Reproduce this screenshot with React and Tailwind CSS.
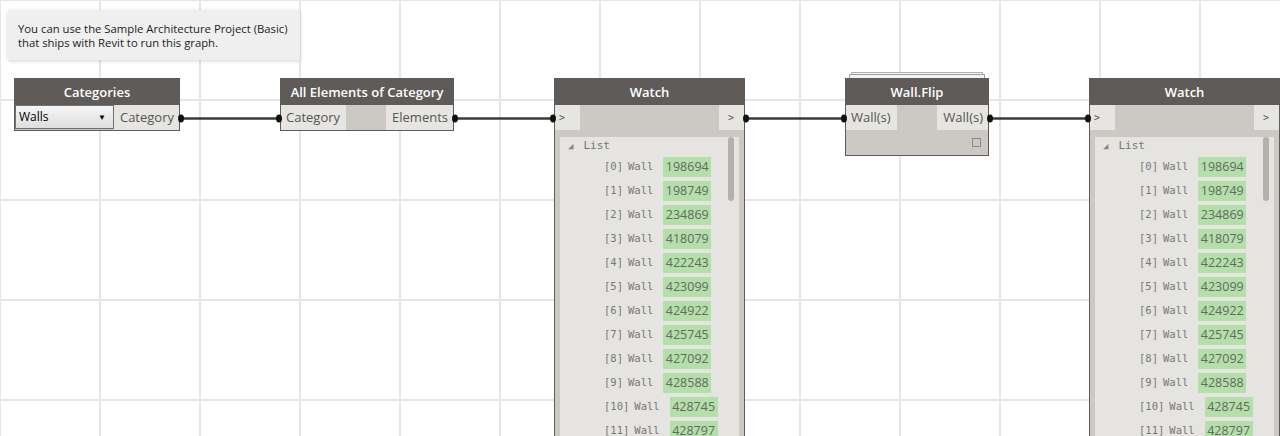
import React from "react";

const items = [
  "198694","198749","234869","418079","422243","423099","424922","425745","427092","428588","428745","428797",
];

function Header({ title }) {
  return (
    <div className="h-[27px] bg-[#5e5b58] flex items-center justify-center text-white text-[13px] font-semibold leading-none pt-[1px]">
      {title}
    </div>
  );
}

function Watch({ left }) {
  return (
    <div
      className={`absolute top-[78px] w-[191px] h-[380px] bg-[#ccc8c3] border border-[#5e5b58] border-t-0 ${left}`}
    >
      <Header title="Watch" />
      <div className="h-[25px] flex justify-between">
        <div className="w-[25px] bg-[#e6e5e1] text-[10px] text-[#555] flex items-center pl-[4px] font-['DejaVu_Sans_Mono',monospace]">&gt;</div>
        <div className="w-[25px] bg-[#e6e5e1] text-[10px] text-[#555] flex items-center pl-[9px] font-['DejaVu_Sans_Mono',monospace]">&gt;</div>
      </div>
      <div className="relative mx-[5px] mt-[7px] h-[340px] bg-[#e5e4e1] overflow-hidden">
        <div className="absolute right-[5px] top-0 w-[6px] h-[64px] rounded-[3px] bg-[#b4b1ad]" />
        <div className="h-[18px] flex items-center text-[11px] text-[#777] font-['DejaVu_Sans_Mono',monospace] pt-[1px]">
          <span className="ml-[8px] text-[9px] text-[#888]">◢</span>
          <span className="ml-[10px]">List</span>
        </div>
        {items.map((v, i) => (
          <div key={i} className="h-[24px] flex items-center pl-[44px]">
            <span className="text-[10.5px] text-[#777] font-['DejaVu_Sans_Mono',monospace]">[{i}]</span>
            <span className="ml-[5px] text-[10.5px] text-[#777] font-['DejaVu_Sans_Mono',monospace]">Wall</span>
            <span className="ml-[10px] h-[20px] w-[48px] bg-[#b3e0a8] flex items-center justify-center text-[12.5px] text-[#666]">{v}</span>
          </div>
        ))}
      </div>
    </div>
  );
}

export default function App() {
  return (
    <div className="relative w-[1280px] h-[436px] overflow-hidden bg-white font-['Open_Sans',sans-serif] bg-[linear-gradient(to_right,#e6e6e6_2px,transparent_2px),linear-gradient(to_bottom,#e6e6e6_2px,transparent_2px)] bg-[size:100px_100px] bg-[position:-1px_-1px]">
      {/* note */}
      <div className="absolute left-[8px] top-[10px] w-[292px] h-[50px] bg-[#efefef] shadow-[0_1px_4px_rgba(0,0,0,0.18)] pl-[10px] pt-[12px] text-[11.3px] leading-[14px] text-[#222]">
        <div>You can use the Sample Architecture Project (Basic)</div>
        <div>that ships with Revit to run this graph.</div>
      </div>

      {/* wires */}
      <svg className="absolute left-0 top-0" width="1280" height="436">
        {[[180, 280], [454, 554], [745, 845], [989, 1089]].map(([a, b], i) => (
          <line key={i} x1={a} y1="118.5" x2={b} y2="118.5" stroke="#3a3a3a" strokeWidth="2.6" />
        ))}
      </svg>

      {/* Categories */}
      <div className="absolute left-[14px] top-[78px] w-[166px] h-[53px] bg-[#ccc8c3] border border-[#5e5b58] border-t-0">
        <Header title="Categories" />
        <div className="h-[25px] flex">
          <div className="w-[99px] h-[24px] border border-[#707070] bg-[linear-gradient(#f6f6f6,#dedede)] flex items-center justify-between pl-[3px] pr-[7px] text-[12px] text-black">
            <span>Walls</span>
            <span className="text-[8px]">▼</span>
          </div>
          <div className="flex-1 bg-[#e6e5e1] flex items-center justify-end pr-[5px] text-[13px] text-[#555]">Category</div>
        </div>
      </div>

      {/* All Elements of Category */}
      <div className="absolute left-[280px] top-[78px] w-[174px] h-[53px] bg-[#ccc8c3] border border-[#5e5b58] border-t-0">
        <Header title="All Elements of Category" />
        <div className="h-[25px] flex justify-between">
          <div className="w-[65px] bg-[#e6e5e1] flex items-center pl-[5px] text-[13px] text-[#555]">Category</div>
          <div className="w-[67px] bg-[#e6e5e1] flex items-center justify-end pr-[5px] text-[13px] text-[#555]">Elements</div>
        </div>
      </div>

      <Watch left="left-[554px]" />

      {/* Wall.Flip stack */}
      <div className="absolute left-[851px] top-[72px] w-[132px] h-[10px] bg-[#f2f2f2] border border-[#b0b0b0]" />
      <div className="absolute left-[849px] top-[74px] w-[136px] h-[10px] bg-[#f2f2f2] border border-[#a0a0a0]" />
      <div className="absolute left-[845px] top-[78px] w-[144px] h-[78px] bg-[#ccc8c3] border border-[#5e5b58] border-t-0">
        <Header title="Wall.Flip" />
        <div className="h-[25px] flex justify-between">
          <div className="w-[51px] bg-[#e6e5e1] flex items-center pl-[5px] text-[13px] text-[#555]">Wall(s)</div>
          <div className="w-[51px] bg-[#e6e5e1] flex items-center justify-end pr-[5px] text-[13px] text-[#555]">Wall(s)</div>
        </div>
        <div className="flex justify-end pr-[7px] pt-[8px]">
          <div className="w-[9px] h-[9px] border border-[#8a8a8a]" />
        </div>
      </div>

      <Watch left="left-[1089px]" />

      {/* port dots */}
      <svg className="absolute left-0 top-0 pointer-events-none" width="1280" height="436">
        {[181, 279, 455, 553, 746, 844, 990, 1088].map((x) => (
          <ellipse key={x} cx={x} cy="118.5" rx="3" ry="4" fill="#111" />
        ))}
      </svg>
    </div>
  );
}
